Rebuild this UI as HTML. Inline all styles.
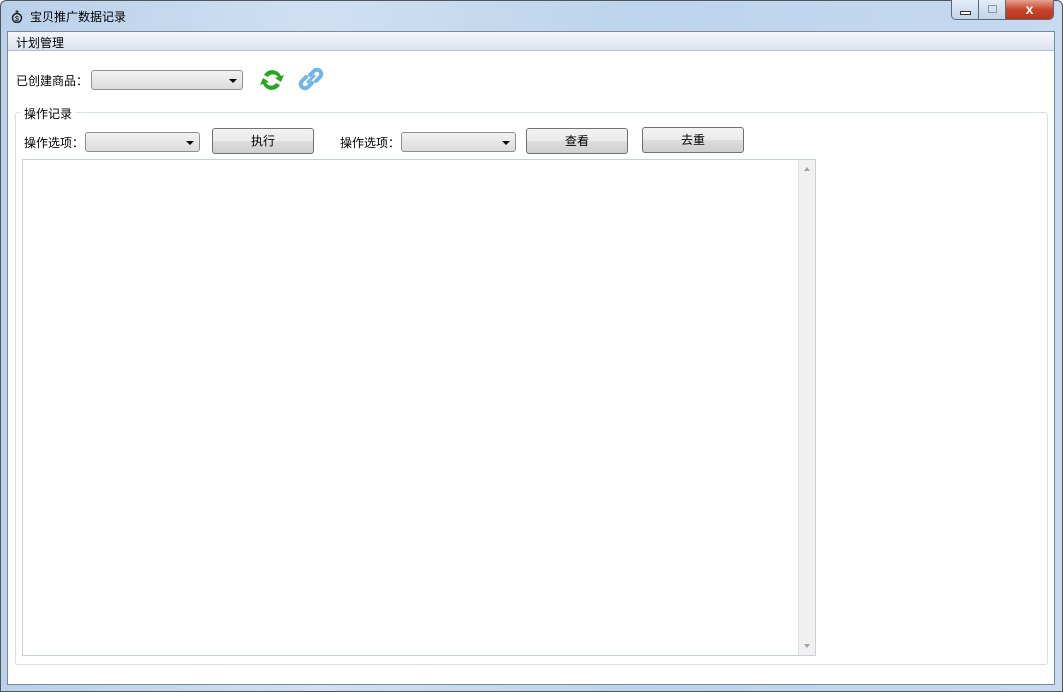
<!DOCTYPE html>
<html><head><meta charset="utf-8"><style>
*{margin:0;padding:0;box-sizing:border-box}
body{width:1063px;height:692px;overflow:hidden;background:#fff;font-family:"Liberation Sans","Noto Sans CJK SC",sans-serif;font-size:12px;color:#000;position:relative}
.frame{position:absolute;left:0;top:0;width:1063px;height:692px;background:linear-gradient(90deg,#b9d1ea 0%,#cfe0f2 30%,#bcd4ec 60%,#c6daf0 100%);border:1px solid #555;border-radius:6px 6px 0 0}
.client{position:absolute;left:7px;top:31px;width:1048px;height:654px;background:#fff;border:1px solid #7a8a9c}
.menu{position:absolute;left:0;top:0;width:1046px;height:19px;background:linear-gradient(#f4f6fb,#dce3f0);border-bottom:1px solid #b6bccc}
.menu span{position:absolute;left:8px;top:2px}
.t{position:absolute;white-space:nowrap}
.combo{position:absolute;height:20px;border:1px solid #8f8f8f;border-radius:3px;background:linear-gradient(#f2f2f2,#dcdcdc)}
.combo:after{content:"";position:absolute;right:5px;top:8px;border-left:4px solid transparent;border-right:4px solid transparent;border-top:4px solid #000}
.btn{position:absolute;height:26px;width:102px;border:1px solid #707070;border-radius:3px;background:linear-gradient(#f2f2f2 0%,#ebebeb 50%,#dddddd 51%,#cfcfcf 100%);text-align:center;line-height:24px}
.btns{position:absolute;top:0;right:9px;height:20px;display:flex;border:1px solid #596a7f;border-top:none;border-radius:0 0 5px 5px;overflow:hidden}
</style></head><body>
<div class="frame"></div>
<svg class="t" style="left:11px;top:9px" width="12" height="14"><path d="M6 1l2 2-2 1-2-1z" fill="#333"/><circle cx="6" cy="9" r="4.5" fill="none" stroke="#222" stroke-width="1.5"/><text x="4" y="12" font-size="7" font-family="Liberation Sans">$</text></svg>
<div class="t" style="left:30px;top:8px;font-size:12px">宝贝推广数据记录</div>
<div class="btns">
<div style="width:27px;background:linear-gradient(#e3ecf7,#c3d3e6);border-right:1px solid #596a7f;position:relative"><div style="position:absolute;left:8px;top:11px;width:11px;height:4px;border:1px solid #333;background:#fff"></div></div>
<div style="width:27px;background:linear-gradient(#e3ecf7,#c3d3e6);border-right:1px solid #596a7f;position:relative"><div style="position:absolute;left:9px;top:5px;width:9px;height:8px;border:1px solid #8899aa"></div></div>
<div style="width:47px;background:linear-gradient(#e8a393,#c8452c 50%,#b9351c);color:#fff;text-align:center;font-weight:bold;font-size:14px;line-height:19px">x</div>
</div>
<div class="client">
<div class="menu"><span>计划管理</span></div>
<div class="t" style="left:8px;top:40px">已创建商品：</div>
<div class="combo" style="left:83px;top:38px;width:152px"></div>
<svg class="t" style="left:250px;top:35px" width="28" height="26"><path d="M14 3a10 10 0 0 1 9 6l3-1-3 7-6-4 3-1a6 6 0 0 0-10 0l-4-2a10 10 0 0 1 8-5z" fill="#23a81f"/><path d="M14 23a10 10 0 0 1-9-6l-3 1 3-7 6 4-3 1a6 6 0 0 0 10 0l4 2a10 10 0 0 1-8 5z" fill="#23a81f"/></svg>
<svg class="t" style="left:290px;top:34px" width="28" height="26"><g fill="none" stroke="#6eb6e8" stroke-width="4" stroke-linecap="round"><path d="M12 9l4-4a4 4 0 0 1 6 6l-4 4"/><path d="M14 17l-4 4a4 4 0 0 1-6-6l4-4"/><path d="M10 16l6-6" stroke-width="3"/></g></svg>
<div style="position:absolute;left:7px;top:80px;width:1033px;height:553px;border:1px solid #d5dfe5;border-radius:3px"></div>
<div class="t" style="left:12px;top:73px;background:#fff;padding:0 4px">操作记录</div>
<div class="t" style="left:16px;top:102px">操作选项：</div>
<div class="combo" style="left:77px;top:100px;width:115px"></div>
<div class="btn" style="left:204px;top:96px">执行</div>
<div class="t" style="left:332px;top:102px">操作选项：</div>
<div class="combo" style="left:393px;top:100px;width:115px"></div>
<div class="btn" style="left:518px;top:96px">查看</div>
<div class="btn" style="left:634px;top:95px">去重</div>
<div style="position:absolute;left:14px;top:127px;width:794px;height:497px;border:1px solid #c8d0d8">
<div style="position:absolute;right:0;top:0;width:17px;height:495px;background:#f0f0f0;border-left:1px solid #e2e2e2"></div>
<div style="position:absolute;right:5px;top:7px;border-left:3px solid transparent;border-right:3px solid transparent;border-bottom:4px solid #a0a0a0"></div>
<div style="position:absolute;right:5px;bottom:7px;border-left:3px solid transparent;border-right:3px solid transparent;border-top:4px solid #a0a0a0"></div>
</div>
</div>
</body></html>
